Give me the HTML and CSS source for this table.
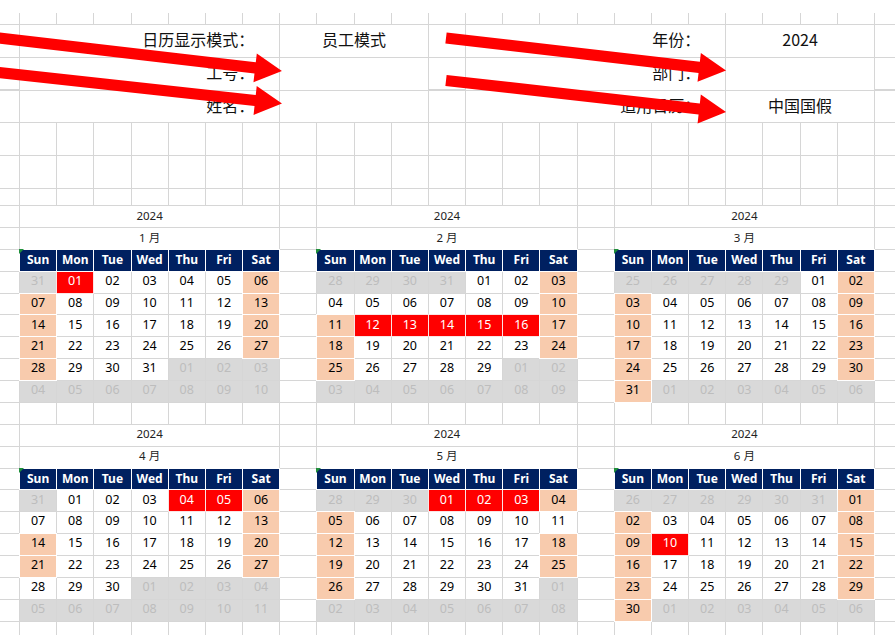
FILE: index.html
```html
<!DOCTYPE html>
<html lang="zh-CN">
<head>
<meta charset="utf-8">
<title>日历</title>
<link rel="stylesheet" href="styles.css">
</head>
<body>
<div class="sheet">
  <div class="band"></div>
  <div class="form">
    <div class="cell label row-a col-l1">日历显示模式：</div>
    <div class="cell value row-a col-v1">员工模式</div>
    <div class="cell label row-a col-l2">年份：</div>
    <div class="cell value row-a col-v2">2024</div>
    <div class="cell label row-b col-l1">工号：</div>
    <div class="cell value row-b col-v1"></div>
    <div class="cell label row-b col-l2">部门：</div>
    <div class="cell value row-b col-v2"></div>
    <div class="cell label row-c col-l1">姓名：</div>
    <div class="cell value row-c col-v1"></div>
    <div class="cell label row-c col-l2">适用日历：</div>
    <div class="cell value row-c col-v2">中国国假</div>
  </div>

  <div class="cals">
    <div class="cal cal-1">
      <div class="ttl">2024</div><div class="ttl">1 月</div>
      <div class="hd">Sun<i class="flag"></i></div><div class="hd">Mon</div><div class="hd">Tue</div><div class="hd">Wed</div><div class="hd">Thu</div><div class="hd">Fri</div><div class="hd">Sat</div>
      <span class="o">31</span><span class="h">01</span><span>02</span><span>03</span><span>04</span><span>05</span><span class="w">06</span>
      <span class="w">07</span><span>08</span><span>09</span><span>10</span><span>11</span><span>12</span><span class="w">13</span>
      <span class="w">14</span><span>15</span><span>16</span><span>17</span><span>18</span><span>19</span><span class="w">20</span>
      <span class="w">21</span><span>22</span><span>23</span><span>24</span><span>25</span><span>26</span><span class="w">27</span>
      <span class="w">28</span><span>29</span><span>30</span><span>31</span><span class="o">01</span><span class="o">02</span><span class="o">03</span>
      <span class="o">04</span><span class="o">05</span><span class="o">06</span><span class="o">07</span><span class="o">08</span><span class="o">09</span><span class="o">10</span>
    </div>

    <div class="cal cal-2">
      <div class="ttl">2024</div><div class="ttl">2 月</div>
      <div class="hd">Sun<i class="flag"></i></div><div class="hd">Mon</div><div class="hd">Tue</div><div class="hd">Wed</div><div class="hd">Thu</div><div class="hd">Fri</div><div class="hd">Sat</div>
      <span class="o">28</span><span class="o">29</span><span class="o">30</span><span class="o">31</span><span>01</span><span>02</span><span class="w">03</span>
      <span>04</span><span>05</span><span>06</span><span>07</span><span>08</span><span>09</span><span class="w">10</span>
      <span class="w">11</span><span class="h">12</span><span class="h">13</span><span class="h">14</span><span class="h">15</span><span class="h">16</span><span class="w">17</span>
      <span class="w">18</span><span>19</span><span>20</span><span>21</span><span>22</span><span>23</span><span class="w">24</span>
      <span class="w">25</span><span>26</span><span>27</span><span>28</span><span>29</span><span class="o">01</span><span class="o">02</span>
      <span class="o">03</span><span class="o">04</span><span class="o">05</span><span class="o">06</span><span class="o">07</span><span class="o">08</span><span class="o">09</span>
    </div>

    <div class="cal cal-3">
      <div class="ttl">2024</div><div class="ttl">3 月</div>
      <div class="hd">Sun<i class="flag"></i></div><div class="hd">Mon</div><div class="hd">Tue</div><div class="hd">Wed</div><div class="hd">Thu</div><div class="hd">Fri</div><div class="hd">Sat</div>
      <span class="o">25</span><span class="o">26</span><span class="o">27</span><span class="o">28</span><span class="o">29</span><span>01</span><span class="w">02</span>
      <span class="w">03</span><span>04</span><span>05</span><span>06</span><span>07</span><span>08</span><span class="w">09</span>
      <span class="w">10</span><span>11</span><span>12</span><span>13</span><span>14</span><span>15</span><span class="w">16</span>
      <span class="w">17</span><span>18</span><span>19</span><span>20</span><span>21</span><span>22</span><span class="w">23</span>
      <span class="w">24</span><span>25</span><span>26</span><span>27</span><span>28</span><span>29</span><span class="w">30</span>
      <span class="w">31</span><span class="o">01</span><span class="o">02</span><span class="o">03</span><span class="o">04</span><span class="o">05</span><span class="o">06</span>
    </div>

    <div class="cal cal-4">
      <div class="ttl">2024</div><div class="ttl">4 月</div>
      <div class="hd">Sun<i class="flag"></i></div><div class="hd">Mon</div><div class="hd">Tue</div><div class="hd">Wed</div><div class="hd">Thu</div><div class="hd">Fri</div><div class="hd">Sat</div>
      <span class="o">31</span><span>01</span><span>02</span><span>03</span><span class="h">04</span><span class="h">05</span><span class="w">06</span>
      <span>07</span><span>08</span><span>09</span><span>10</span><span>11</span><span>12</span><span class="w">13</span>
      <span class="w">14</span><span>15</span><span>16</span><span>17</span><span>18</span><span>19</span><span class="w">20</span>
      <span class="w">21</span><span>22</span><span>23</span><span>24</span><span>25</span><span>26</span><span class="w">27</span>
      <span>28</span><span>29</span><span>30</span><span class="o">01</span><span class="o">02</span><span class="o">03</span><span class="o">04</span>
      <span class="o">05</span><span class="o">06</span><span class="o">07</span><span class="o">08</span><span class="o">09</span><span class="o">10</span><span class="o">11</span>
    </div>

    <div class="cal cal-5">
      <div class="ttl">2024</div><div class="ttl">5 月</div>
      <div class="hd">Sun<i class="flag"></i></div><div class="hd">Mon</div><div class="hd">Tue</div><div class="hd">Wed</div><div class="hd">Thu</div><div class="hd">Fri</div><div class="hd">Sat</div>
      <span class="o">28</span><span class="o">29</span><span class="o">30</span><span class="h">01</span><span class="h">02</span><span class="h">03</span><span class="w">04</span>
      <span class="w">05</span><span>06</span><span>07</span><span>08</span><span>09</span><span>10</span><span>11</span>
      <span class="w">12</span><span>13</span><span>14</span><span>15</span><span>16</span><span>17</span><span class="w">18</span>
      <span class="w">19</span><span>20</span><span>21</span><span>22</span><span>23</span><span>24</span><span class="w">25</span>
      <span class="w">26</span><span>27</span><span>28</span><span>29</span><span>30</span><span>31</span><span class="o">01</span>
      <span class="o">02</span><span class="o">03</span><span class="o">04</span><span class="o">05</span><span class="o">06</span><span class="o">07</span><span class="o">08</span>
    </div>

    <div class="cal cal-6">
      <div class="ttl">2024</div><div class="ttl">6 月</div>
      <div class="hd">Sun<i class="flag"></i></div><div class="hd">Mon</div><div class="hd">Tue</div><div class="hd">Wed</div><div class="hd">Thu</div><div class="hd">Fri</div><div class="hd">Sat</div>
      <span class="o">26</span><span class="o">27</span><span class="o">28</span><span class="o">29</span><span class="o">30</span><span class="o">31</span><span class="w">01</span>
      <span class="w">02</span><span>03</span><span>04</span><span>05</span><span>06</span><span>07</span><span class="w">08</span>
      <span class="w">09</span><span class="h">10</span><span>11</span><span>12</span><span>13</span><span>14</span><span class="w">15</span>
      <span class="w">16</span><span>17</span><span>18</span><span>19</span><span>20</span><span>21</span><span class="w">22</span>
      <span class="w">23</span><span>24</span><span>25</span><span>26</span><span>27</span><span>28</span><span class="w">29</span>
      <span class="w">30</span><span class="o">01</span><span class="o">02</span><span class="o">03</span><span class="o">04</span><span class="o">05</span><span class="o">06</span>
    </div>
  </div>

  <svg class="arrows" width="895" height="140" viewBox="0 0 895 140" aria-hidden="true">
    <g transform="translate(-5 37.5) rotate(6.66)"><polygon points="0,-5.6 261.9,-5.6 261.9,-14.5 288.9,0 261.9,14.5 261.9,5.6 0,5.6"/></g>
    <g transform="translate(-5 72) rotate(6.26)"><polygon points="0,-5.6 261.7,-5.6 261.7,-14.5 288.7,0 261.7,14.5 261.7,5.6 0,5.6"/></g>
    <g transform="translate(446 38) rotate(6.62)"><polygon points="0,-5.6 254.9,-5.6 254.9,-14.5 281.9,0 254.9,14.5 254.9,5.6 0,5.6"/></g>
    <g transform="translate(446 80.5) rotate(6.42)"><polygon points="0,-5.6 254.8,-5.6 254.8,-14.5 281.8,0 254.8,14.5 254.8,5.6 0,5.6"/></g>
  </svg>
</div>
</body>
</html>
```

FILE: styles.css
```css
html, body {
  margin: 0;
  padding: 0;
  background: #fff;
  overflow: hidden;
}

.sheet {
  position: relative;
  width: 895px;
  height: 635px;
  overflow: hidden;
  font-family: "Noto Sans", "Noto Sans CJK SC", sans-serif;
  color: #000;
}

.band {
  height: 13px;
}

/* shared spreadsheet column tracks */
.form,
.cals {
  display: grid;
  grid-template-columns: 19px repeat(23, 37.174px) 1fr;
}

.form {
  height: 192px;
  grid-template-rows: 11px repeat(5, 32.75px) 1fr;
  background-image:
    repeating-linear-gradient(to right, transparent 0 19px, #d6d6d6 19px 20px, transparent 20px 37.174px),
    repeating-linear-gradient(to bottom, transparent 0 11px, #d6d6d6 11px 12px, transparent 12px 32.75px);
}

.cell {
  margin: 1px 0 0 1px;
  padding-bottom: 3px;
  background: #fff;
  display: flex;
  align-items: center;
  font-family: "Noto Sans CJK SC", sans-serif;
  font-size: 16px;
  line-height: 1;
  color: #111;
}

.label {
  justify-content: flex-end;
  padding-right: 25px;
}

.value {
  justify-content: center;
}

.row-a { grid-row: 2; }
.row-b { grid-row: 3; }
.row-c { grid-row: 4; }
.col-l1 { grid-column: 2 / span 7; }
.col-v1 { grid-column: 9 / span 4; }
.col-l2 { grid-column: 14 / span 7; }
.col-v2 { grid-column: 21 / span 4; }

.cals {
  grid-template-rows: repeat(20, 21.88px);
  background-image:
    repeating-linear-gradient(to right, transparent 0 19px, #d6d6d6 19px 20px, transparent 20px 37.174px),
    repeating-linear-gradient(to bottom, #d6d6d6 0 1px, transparent 1px 21.88px);
}

.cal {
  display: grid;
  grid-template-columns: repeat(7, 1fr);
  grid-template-rows: repeat(9, 1fr);
  gap: 1px;
  padding: 1px 0 0 1px;
  font-size: 12.5px;
}

.cal-1 { grid-area: 1 / 2 / span 9 / span 7; }
.cal-2 { grid-area: 1 / 10 / span 9 / span 7; }
.cal-3 { grid-area: 1 / 18 / span 9 / span 7; }
.cal-4 { grid-area: 11 / 2 / span 9 / span 7; }
.cal-5 { grid-area: 11 / 10 / span 9 / span 7; }
.cal-6 { grid-area: 11 / 18 / span 9 / span 7; }

.cal > div,
.cal > span {
  display: flex;
  align-items: center;
  justify-content: center;
  background: #fff;
  line-height: 1;
  padding-bottom: 2px;
}

.ttl {
  grid-column: 1 / -1;
  font-family: "Noto Sans", "Noto Sans CJK SC", sans-serif;
  font-size: 11.5px;
  color: #222;
}

.cal > .hd {
  position: relative;
  padding-bottom: 0;
  background: #002060;
  color: #fff;
  font-weight: 700;
  font-size: 12px;
  box-shadow: 0 0 0 1px #fff;
}

.flag {
  position: absolute;
  left: -1px;
  top: -1px;
  width: 0;
  height: 0;
  border-top: 5px solid #1f8f3a;
  border-right: 5px solid transparent;
}

.cal > .w {
  background: #f8cbad;
  box-shadow: 0 0 0 1px #fff;
}

.cal > .h {
  background: #ff0000;
  color: #fff;
  box-shadow: 0 0 0 1px #fbe4e4;
}

.cal > .o {
  background: #d9d9d9;
  color: #bdbdbd;
}

.arrows {
  position: absolute;
  left: 0;
  top: 0;
  fill: #ff0000;
  pointer-events: none;
}
```
